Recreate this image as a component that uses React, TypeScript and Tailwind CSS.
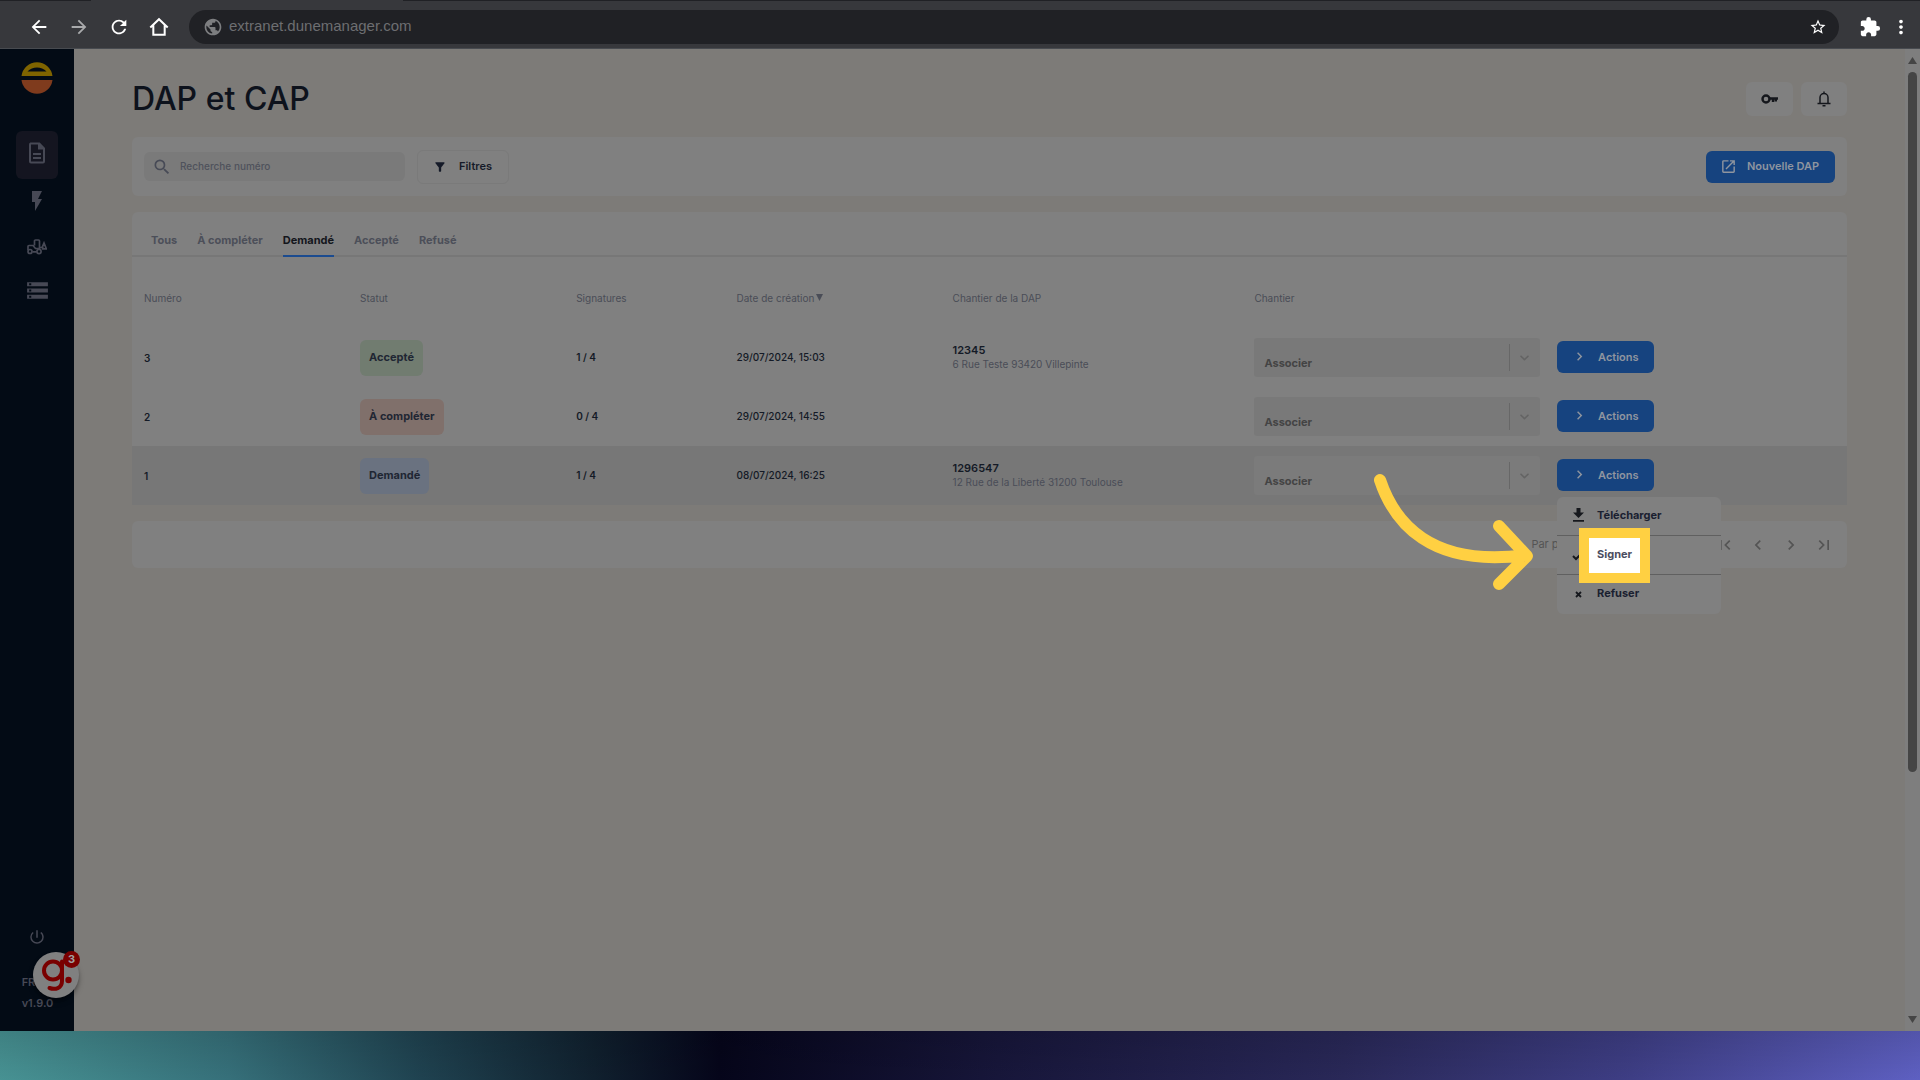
import React from "react";
import {
  MdArrowBack,
  MdArrowForward,
  MdRefresh,
  MdPublic,
  MdStarBorder,
  MdExtension,
  MdMoreVert,
  MdFlashOn,
  MdStorage,
  MdPowerSettingsNew,
  MdSearch,
  MdFilterAlt,
  MdOpenInNew,
  MdChevronLeft,
  MdChevronRight,
  MdFirstPage,
  MdLastPage,
} from "react-icons/md";

type Row = {
  id: string;
  status: string;
  badge: string;
  signatures: string;
  date: string;
  ref?: string;
  address?: string;
  open?: boolean;
};

const rows: Row[] = [
  {
    id: "3",
    status: "Accepté",
    badge: "bg-[#717c70]",
    signatures: "1 / 4",
    date: "29/07/2024, 15:03",
    ref: "12345",
    address: "6 Rue Teste 93420 Villepinte",
  },
  {
    id: "2",
    status: "À compléter",
    badge: "bg-[#80706b]",
    signatures: "0 / 4",
    date: "29/07/2024, 14:55",
  },
  {
    id: "1",
    status: "Demandé",
    badge: "bg-[#6a7280]",
    signatures: "1 / 4",
    date: "08/07/2024, 16:25",
    ref: "1296547",
    address: "12 Rue de la Liberté 31200 Toulouse",
    open: true,
  },
];

const tabs = ["Tous", "À compléter", "Demandé", "Accepté", "Refusé"];

function BrowserBar() {
  return (
    <header className="flex h-[49px] shrink-0 flex-col border-b border-[#484b50] bg-[#37383c] text-white">
      <div className="flex h-px">
        <span className="w-[91px] bg-[#202125]" />
        <span className="w-[312px]" />
        <span className="flex-1 bg-[#202125]" />
      </div>
      <div className="flex flex-1 items-center pt-1 pr-2 pl-7">
        <nav className="flex items-center gap-[18px]" aria-label="Navigation">
          <button aria-label="Précédent"><MdArrowBack size={22} /></button>
          <button aria-label="Suivant" className="text-[#a9aaac]"><MdArrowForward size={22} /></button>
          <button aria-label="Actualiser"><MdRefresh size={22} /></button>
          <button aria-label="Accueil">
            <svg width="22" height="22" viewBox="0 0 24 24" fill="none" stroke="currentColor" strokeWidth="2.2">
              <path d="M2.5 12.5 12 3.500l9.500 9M5.800 10v10.500h12.400V10" />
            </svg>
          </button>
        </nav>
        <div className="ml-[19px] flex h-[34px] flex-1 items-center rounded-full bg-[#202125] pr-3 pl-3.5">
          <MdPublic size={20} className="text-[#7d7e80]" />
          <input
            aria-label="Adresse"
            defaultValue="extranet.dunemanager.com"
            className="ml-1.5 min-w-0 flex-1 bg-transparent font-['Liberation_Sans',sans-serif] text-[15px] text-[#6d6e71] outline-none"
          />
          <button aria-label="Favori"><MdStarBorder size={18} /></button>
        </div>
        <button aria-label="Extensions" className="ml-5"><MdExtension size={22} /></button>
        <button aria-label="Menu" className="ml-[9px]"><MdMoreVert size={22} /></button>
      </div>
    </header>
  );
}

function DuneLogo() {
  return (
    <svg width="32" height="32" viewBox="0 0 32 32" aria-label="Dune">
      <path d="M.5 14a15.600 15.600 0 0 1 31 0z" fill="#7f6400" />
      <path d="M6.500 9.600c5-5.500 14-5.500 19 0z" fill="#030b15" />
      <path d="M.5 18h31a15.600 15.600 0 0 1-31 0z" fill="#7f3b1d" />
    </svg>
  );
}

function DocIcon() {
  return (
    <svg width="18" height="22" viewBox="0 0 18 22" fill="none" stroke="currentColor" strokeWidth="2">
      <path d="M2.500 1.500h8.800L16 6.300v13.200a1 1 0 0 1-1 1H3a1 1 0 0 1-1-1v-17a1 1 0 0 1 .5-1z" />
      <path d="M11 1.500v5h5" fill="currentColor" />
      <path d="M5 12h8M5 16h8" />
    </svg>
  );
}

function TractorIcon() {
  return (
    <svg width="20" height="16" viewBox="0 0 20 16" fill="none" stroke="currentColor" strokeWidth="1.700">
      <path d="M7.500 6.500V2a1 1 0 0 1 1-1h3a1 1 0 0 1 1 1v8M1 11V7.500a1 1 0 0 1 1-1h4l2.500 3h4M5.500 12.800h4" />
      <circle cx="3" cy="12.500" r="2" />
      <circle cx="12" cy="12.500" r="2.100" />
      <path d="M13 8.500h2L17 4l2.300 5.800h-3.600V7" />
    </svg>
  );
}

function HelpWidget() {
  return (
    <button aria-label="Aide, 3 notifications" className="absolute bottom-[33px] left-[33px] z-10">
      <span className="flex size-[46px] items-center justify-center rounded-full bg-[#808080] shadow-md shadow-black/40">
        <svg width="46" height="46" viewBox="0 0 46 46" fill="none" stroke="#790000" strokeWidth="4" strokeLinecap="round">
          <circle cx="20" cy="18.500" r="9" />
          <path d="M29 9.500V29c0 7.500-7 9-12.500 7" />
          <circle cx="35.500" cy="28" r="3.200" fill="#790000" stroke="none" />
        </svg>
      </span>
      <span className="absolute -top-px -right-px flex size-[17px] items-center justify-center rounded-full bg-[#790000] text-[11px] font-bold text-[#a0a0a0]">
        3
      </span>
    </button>
  );
}

function Sidebar() {
  return (
    <aside className="relative flex w-[74px] shrink-0 flex-col items-center bg-[#030b15] pt-[13px] pb-5 text-[#474955]">
      <DuneLogo />
      <nav className="mt-[37px] flex flex-col items-center" aria-label="Menu principal">
        <a href="#dap" aria-label="DAP" className="flex h-12 w-[42px] items-center justify-center rounded-md bg-[#141520] pb-1">
          <DocIcon />
        </a>
        <a href="#actions" aria-label="Énergie" className="mt-2.5"><MdFlashOn size={24} /></a>
        <a href="#engins" aria-label="Engins" className="mt-[26px]"><TractorIcon /></a>
        <a href="#listes" aria-label="Listes" className="mt-[23px]"><MdStorage size={25} /></a>
      </nav>
      <button aria-label="Déconnexion" className="mt-auto"><MdPowerSettingsNew size={18} /></button>
      <div className="mt-7 flex flex-col gap-[5px] pl-px text-[11px] leading-4 font-semibold">
        <span>FR</span>
        <span>v1.9.0</span>
      </div>
      <HelpWidget />
    </aside>
  );
}

function SignerArrow() {
  return (
    <svg
      width="160"
      height="118"
      viewBox="0 0 160 118"
      fill="none"
      stroke="#ffd042"
      strokeWidth="12"
      strokeLinecap="round"
      strokeLinejoin="round"
      className="pointer-events-none absolute -top-[63px] right-[187px] max-w-none"
    >
      <path d="M6 7c14 42 50 88 146 75M125 53l28 30-28 28" />
    </svg>
  );
}

function ActionsMenu() {
  return (
    <ul className="absolute top-[38px] left-0 z-20 w-[164px] rounded-md bg-[#808080] text-[11px] font-bold text-[#1a2030]">
      <li className="h-[39px] border-b border-[#606060]">
        <button className="flex h-full w-full items-center pb-0.5 pl-4">
          <svg width="11" height="14" viewBox="0 0 11 14" fill="#16181d">
            <path d="M3.500 0h4v4.500H11l-5.500 5.500L0 4.500h3.500zM0 12h11v1.800H0z" />
          </svg>
          <span className="ml-[13px]">Télécharger</span>
        </button>
      </li>
      <li className="relative h-[39px] border-b border-[#606060]">
        <button className="flex h-full w-full items-center pl-[15px]">
          <svg width="10" height="8" viewBox="0 0 10 8" fill="none" stroke="#16181d" strokeWidth="2" className="mt-1">
            <path d="M1 3l3 3 5-5" />
          </svg>
        </button>
        <span className="absolute -top-2 left-[22px] flex h-[55px] w-[71px] items-center justify-center border-10 border-[#ffd042] bg-white pb-0.5 text-[#4b4d60]">
          Signer
        </span>
        <SignerArrow />
      </li>
      <li className="h-[39px]">
        <button className="flex h-full w-full items-center pb-0.5 pl-[18px]">
          <svg width="7" height="7" viewBox="0 0 7 7" stroke="#16181d" strokeWidth="1.800" className="mt-0.5">
            <path d="M1 1l5 5M6 1L1 6" />
          </svg>
          <span className="ml-[15px]">Refuser</span>
        </button>
      </li>
    </ul>
  );
}

function SiteSelect({ row }: { row: Row }) {
  return (
    <div className={`relative h-[39px] rounded-[3px] ${row.open ? "bg-[#7b7b7b]" : "bg-[#797979]"}`}>
      <select
        aria-label={`Chantier de la DAP ${row.id}`}
        className="h-full w-full appearance-none bg-transparent px-2.5 pt-2.5 text-[11px] font-bold text-[#444] outline-none"
      >
        <option>Associer</option>
      </select>
      <div className="pointer-events-none absolute inset-y-0 right-0 flex w-[31px] items-center text-[#646464]">
        <span className="h-[27px] w-px bg-[#676767]" />
        <svg width="15" height="15" viewBox="0 0 20 20" fill="currentColor" className="ml-[7px]">
          <path d="M4.516 7.548c.436-.446 1.043-.481 1.576 0L10 11.295l3.908-3.747c.533-.481 1.141-.446 1.574 0 .436.445.408 1.197 0 1.615-.406.418-4.695 4.502-4.695 4.502a1.095 1.095 0 0 1-1.576 0S4.924 9.581 4.516 9.163s-.436-1.170 0-1.615z" />
        </svg>
      </div>
    </div>
  );
}

function DapTable() {
  return (
    <table className="mt-3 w-full table-fixed text-left text-[10px] leading-[14px]">
      <colgroup>
        <col className="w-[12.600%]" />
        <col className="w-[12.600%]" />
        <col className="w-[9.350%]" />
        <col className="w-[12.600%]" />
        <col className="w-[17.600%]" />
        <col className="w-[17.650%]" />
        <col />
      </colgroup>
      <thead>
        <tr className="h-[59px] text-[#4a4d57]">
          <th className="px-3 pb-0.5 font-normal">Numéro</th>
          <th className="px-3 pb-0.5 font-normal">Statut</th>
          <th className="px-3 pb-0.5 font-normal">Signatures</th>
          <th className="px-3 pb-0.5 font-normal whitespace-nowrap">
            Date de création
            <svg width="7" height="7" viewBox="0 0 7 7" fill="currentColor" className="ml-0.5 inline-block align-[1px]">
              <path d="M0 0h7L3.500 7z" />
            </svg>
          </th>
          <th className="px-3 pb-0.5 font-normal">Chantier de la DAP</th>
          <th className="px-3 pb-0.5 font-normal">Chantier</th>
          <th aria-label="Actions" />
        </tr>
      </thead>
      <tbody>
        {rows.map((row) => (
          <tr key={row.id} className={`h-[59px] text-[#141a26] ${row.open ? "bg-[#777]" : ""}`}>
            <td className="px-3 font-semibold">{row.id}</td>
            <td className="px-3">
              <span className={`inline-flex h-9 items-center rounded-md px-[9px] pb-0.5 align-middle text-[11px] font-bold text-[#202633] ${row.badge}`}>
                {row.status}
              </span>
            </td>
            <td className="px-3 pb-0.5 font-semibold">{row.signatures}</td>
            <td className="px-3 pb-0.5 font-medium whitespace-nowrap">{row.date}</td>
            <td className="px-3 pb-0.5">
              <div className="text-[11px] font-semibold">{row.ref}</div>
              <div className="text-[#4a4d57]">{row.address}</div>
            </td>
            <td className="pr-[5px] pl-3"><SiteSelect row={row} /></td>
            <td className="px-3 pb-0.5">
              <div className="relative">
                <button
                  aria-expanded={!!row.open}
                  className="flex h-8 w-[97px] items-center rounded-md bg-[#16437f] pl-3.5 text-[11px] font-semibold text-[#8f959f]"
                >
                  <MdChevronRight size={17} />
                  <span className="ml-2.5">Actions</span>
                </button>
                {row.open && <ActionsMenu />}
              </div>
            </td>
          </tr>
        ))}
      </tbody>
    </table>
  );
}

function Content() {
  return (
    <main className="min-w-0 flex-1 px-[58px] pt-[30px]">
      <div className="flex items-center justify-between">
        <h1 className="text-[32px] leading-10 font-medium text-[#0d121c]">DAP et CAP</h1>
        <div className="flex gap-2 text-[#15171c]">
          <button aria-label="Accès" className="flex h-[34px] w-[47px] items-center justify-center rounded-md bg-[#808080]">
            <svg width="17" height="10" viewBox="0 0 17 10" fill="none" stroke="currentColor" strokeWidth="2.400">
              <circle cx="5" cy="5" r="3.500" />
              <path d="M8.500 4.500H17M12 5v3M14.800 5v2.500" />
            </svg>
          </button>
          <button aria-label="Notifications" className="flex h-[34px] w-[46px] items-center justify-center rounded-md bg-[#808080]">
            <svg width="14" height="16" viewBox="0 0 14 16" fill="none" stroke="currentColor" strokeWidth="1.500">
              <path d="M3 12V6.500a4 4 0 0 1 8 0V12M.5 12.500h13M7 2.500V.5M5.500 14.800h3" />
            </svg>
          </button>
        </div>
      </div>

      <section className="mt-[18px] flex h-[59px] items-center rounded-md bg-[#808080] px-3">
        <label className="flex h-[29px] w-[261px] items-center rounded-md bg-[#7a7a7a] pl-2 text-[#474a56]">
          <MdSearch size={20} />
          <input
            aria-label="Recherche numéro"
            placeholder="Recherche numéro"
            className="ml-2 min-w-0 flex-1 bg-transparent text-[10px] font-medium outline-none placeholder:text-[#4f525c]"
          />
        </label>
        <button className="ml-3 flex h-[34px] w-[92px] items-center rounded-md border border-[#7a7a7a] pl-[15px] text-[11px] font-semibold text-[#151a28]">
          <MdFilterAlt size={14} />
          <span className="ml-3">Filtres</span>
        </button>
        <button className="ml-auto flex h-8 w-[129px] items-center rounded-md bg-[#16437f] pl-3.5 text-[11px] font-semibold text-[#8f959f]">
          <MdOpenInNew size={17} />
          <span className="ml-2.5">Nouvelle DAP</span>
        </button>
      </section>

      <section className="mt-4 rounded-t-md bg-[#808080]">
        <div className="flex h-[45px] items-end gap-5 border-b-2 border-[#777] px-[19px]" role="tablist">
          {tabs.map((tab) => (
            <button
              key={tab}
              role="tab"
              aria-selected={tab === "Demandé"}
              className={`-mb-0.5 h-8 border-b-2 text-[11px] font-bold ${
                tab === "Demandé" ? "border-[#1b4b8f] text-[#14161c]" : "border-transparent text-[#4c4f59]"
              }`}
            >
              {tab}
            </button>
          ))}
        </div>
        <DapTable />
      </section>

      <footer className="mt-4 flex h-[47px] items-center justify-end rounded-md bg-[#808080] pr-[13px] text-[#545454]">
        <span className="mr-[137px] text-[11px]">Par page</span>
        <div className="flex items-center gap-[13px]">
          <button aria-label="Première page"><MdFirstPage size={20} /></button>
          <button aria-label="Page précédente"><MdChevronLeft size={20} /></button>
          <button aria-label="Page suivante"><MdChevronRight size={20} /></button>
          <button aria-label="Dernière page"><MdLastPage size={20} /></button>
        </div>
      </footer>
    </main>
  );
}

function Scrollbar() {
  return (
    <div className="flex w-[15px] shrink-0 flex-col items-center bg-[#7e7e7e] pt-2 pb-2 text-[#454545]" aria-hidden="true">
      <svg width="9" height="7" viewBox="0 0 9 7" fill="currentColor"><path d="M4.500 0 9 7H0z" /></svg>
      <div className="mt-2 h-[700px] w-[9px] rounded-full bg-[#454545]" />
      <svg width="9" height="7" viewBox="0 0 9 7" fill="currentColor" className="mt-auto"><path d="M0 0h9L4.500 7z" /></svg>
    </div>
  );
}

export default function App() {
  return (
    <div className="flex min-h-screen flex-col bg-[#7d7b78] font-['Inter',sans-serif]">
      <BrowserBar />
      <div className="flex flex-1">
        <Sidebar />
        <Content />
        <Scrollbar />
      </div>
      <div className="h-[49px] shrink-0 bg-[linear-gradient(180deg,rgba(0,0,0,0.120),transparent),linear-gradient(92deg,#479293_0%,#36707a_12%,#1f4250_22%,#10202e_31%,#05051a_37.500%,#17163a_52%,#292858_70%,#3e3e85_85%,#5e60c2_100%)]" />
    </div>
  );
}
